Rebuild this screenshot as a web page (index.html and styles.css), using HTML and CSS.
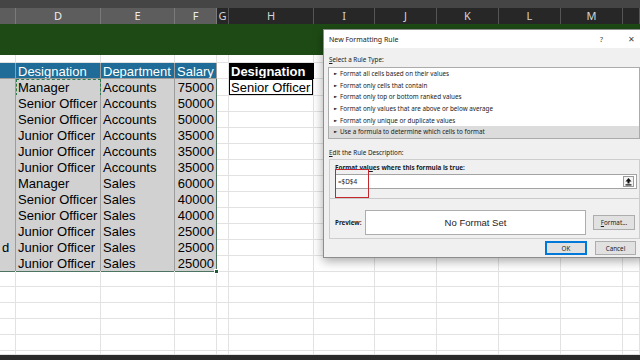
FILE: index.html
```html
<!DOCTYPE html>
<html lang="en">
<head>
    <meta charset="UTF-8">
    <title>Conditional Formatting - Formula Rule</title>
    <link rel="stylesheet" href="styles.css">
</head>
<body>
    <div class="topbar"></div>

    <div class="row heads">
        <span class="on"></span><span class="on">D</span><span class="on">E</span><span class="on">F</span><span>G</span><span>H</span><span>I</span><span>J</span><span>K</span><span>L</span><span>M</span><span></span>
    </div>

    <div class="band"></div>

    <div class="sheet">
        <div class="row part"><span></span><span></span><span></span><span></span><span></span><span></span><span></span><span></span><span></span><span></span><span></span><span></span></div>
        <div class="row"><span class="th"></span><span class="th">Designation</span><span class="th">Department</span><span class="th">Salary</span><span></span><span class="crit">Designation</span><span></span><span></span><span></span><span></span><span></span><span></span></div>
        <div class="row"><span class="t"></span><span class="t copy">Manager</span><span class="t">Accounts</span><span class="t num">75000</span><span></span><span class="box">Senior Officer</span><span></span><span></span><span></span><span></span><span></span><span></span></div>
        <div class="row"><span class="t"></span><span class="t">Senior Officer</span><span class="t">Accounts</span><span class="t num">50000</span><span></span><span></span><span></span><span></span><span></span><span></span><span></span><span></span></div>
        <div class="row"><span class="t"></span><span class="t">Senior Officer</span><span class="t">Accounts</span><span class="t num">50000</span><span></span><span></span><span></span><span></span><span></span><span></span><span></span><span></span></div>
        <div class="row"><span class="t"></span><span class="t">Junior Officer</span><span class="t">Accounts</span><span class="t num">35000</span><span></span><span></span><span></span><span></span><span></span><span></span><span></span><span></span></div>
        <div class="row"><span class="t"></span><span class="t">Junior Officer</span><span class="t">Accounts</span><span class="t num">35000</span><span></span><span></span><span></span><span></span><span></span><span></span><span></span><span></span></div>
        <div class="row"><span class="t"></span><span class="t">Junior Officer</span><span class="t">Accounts</span><span class="t num">35000</span><span></span><span></span><span></span><span></span><span></span><span></span><span></span><span></span></div>
        <div class="row"><span class="t"></span><span class="t">Manager</span><span class="t">Sales</span><span class="t num">60000</span><span></span><span></span><span></span><span></span><span></span><span></span><span></span><span></span></div>
        <div class="row"><span class="t"></span><span class="t">Senior Officer</span><span class="t">Sales</span><span class="t num">40000</span><span></span><span></span><span></span><span></span><span></span><span></span><span></span><span></span></div>
        <div class="row"><span class="t"></span><span class="t">Senior Officer</span><span class="t">Sales</span><span class="t num">40000</span><span></span><span></span><span></span><span></span><span></span><span></span><span></span><span></span></div>
        <div class="row"><span class="t"></span><span class="t">Junior Officer</span><span class="t">Sales</span><span class="t num">25000</span><span></span><span></span><span></span><span></span><span></span><span></span><span></span><span></span></div>
        <div class="row"><span class="t">d</span><span class="t">Junior Officer</span><span class="t">Sales</span><span class="t num">25000</span><span></span><span></span><span></span><span></span><span></span><span></span><span></span><span></span></div>
        <div class="row last"><span class="t"></span><span class="t">Junior Officer</span><span class="t">Sales</span><span class="t num">25000<i class="handle"></i></span><span></span><span></span><span></span><span></span><span></span><span></span><span></span><span></span></div>
        <div class="row"><span></span><span></span><span></span><span></span><span></span><span></span><span></span><span></span><span></span><span></span><span></span><span></span></div>
        <div class="row"><span></span><span></span><span></span><span></span><span></span><span></span><span></span><span></span><span></span><span></span><span></span><span></span></div>
        <div class="row"><span></span><span></span><span></span><span></span><span></span><span></span><span></span><span></span><span></span><span></span><span></span><span></span></div>
        <div class="row"><span></span><span></span><span></span><span></span><span></span><span></span><span></span><span></span><span></span><span></span><span></span><span></span></div>
        <div class="row"><span></span><span></span><span></span><span></span><span></span><span></span><span></span><span></span><span></span><span></span><span></span><span></span></div>
        <div class="row tail"><span></span><span></span><span></span><span></span><span></span><span></span><span></span><span></span><span></span><span></span><span></span><span></span></div>
    </div>

    <div class="bottombar"></div>

    <!-- New Formatting Rule dialog -->
    <div class="dialog">
        <div class="dlg-title">
            <span>New Formatting Rule</span>
            <span class="help">?</span>
            <span class="close">✕</span>
        </div>
        <div class="dlg-body">
            <div class="label"><u>S</u>elect a Rule Type:</div>
            <ul class="rule-list">
                <li><b>►</b>Format all cells based on their values</li>
                <li><b>►</b>Format only cells that contain</li>
                <li><b>►</b>Format only top or bottom ranked values</li>
                <li><b>►</b>Format only values that are above or below average</li>
                <li><b>►</b>Format only unique or duplicate values</li>
                <li class="sel"><b>►</b>Use a formula to determine which cells to format</li>
            </ul>
            <div class="label gap"><u>E</u>dit the Rule Description:</div>
            <div class="desc">
                <div class="desc-top">
                    <div class="strong">Format val<u>u</u>es where this formula is true:</div>
                    <div class="formula">
                        <span>=$D$4</span>
                        <svg class="collapse" width="11" height="11" viewBox="0 0 11 11">
                            <rect x="0.5" y="0.5" width="10" height="10" fill="#f4f4f4" stroke="#9a9a9a"/>
                            <path d="M5.5 2 L8.5 5.5 H6.5 V7.5 H4.5 V5.5 H2.5 Z" fill="#111"/>
                            <rect x="2.5" y="8.3" width="6" height="1.2" fill="#111"/>
                        </svg>
                    </div>
                </div>
                <div class="preview-row">
                    <span class="strong pv-label">Preview:</span>
                    <div class="preview">No Format Set</div>
                    <button class="btn fmt"><u>F</u>ormat...</button>
                </div>
            </div>
            <div class="actions">
                <button class="btn ok">OK</button>
                <button class="btn">Cancel</button>
            </div>
        </div>
        <div class="mark"></div>
    </div>
</body>
</html>
```

FILE: styles.css
```css
body { margin: 0; width: 640px; height: 360px; overflow: hidden; position: relative; background: #fff; font-family: "Liberation Sans", Arial, sans-serif; --cols: 16px 85px 74px 42px 12px 85px 61px 62px 62px 62px 62px 17px; }

.topbar { height: 8px; background: #454545; }
.band { height: 31px; background: #1e4b15; }
.bottombar { height: 5px; background: #2a2a2a; }

/* sheet grid */
.row { display: grid; grid-template-columns: var(--cols); height: 16px; }
.row > span { box-sizing: border-box; border-right: 1px solid #e2e2e2; border-bottom: 1px solid #e2e2e2; padding: 1px 2px 0; font-size: 13px; line-height: 15px; white-space: nowrap; overflow: hidden; color: #000; }
.row.part { height: 8px; }
.row.tail { height: 4px; }

.heads { background: #272727; }
.heads > span { border: none; border-right: 1px solid #555; text-align: center; font: 11px/16px "Noto Sans", sans-serif; color: #d4d4d4; padding: 0; }
.heads > .on { background: #5d5d5d; color: #ececec; border-right-color: #7a7a7a; }

.row > .t { background: #d1d1d1; border-color: #9c9c9c; }
.row > .th { background: #1e6c97; color: #fff; border-color: #9c9c9c; }
.row > .num { text-align: right; border-right-color: #4d7461; position: relative; overflow: visible; }
.row.last > .t { border-bottom-color: #4d7461; }
.row > .copy { outline: 1px dashed #2f7a4c; outline-offset: -1px; }
.row > .crit { background: #000; color: #fff; font-weight: bold; border-color: #000; }
.row > .box { box-shadow: inset 0 0 0 1px #000; }

.handle { position: absolute; right: -3px; bottom: -3px; width: 5px; height: 5px; background: #1f5a37; border: 1px solid #fff; box-sizing: border-box; }

/* dialog */
.dialog { position: absolute; left: 323px; top: 29px; width: 322px; height: 229px; box-sizing: border-box; background: #f0f0f0; border: 1px solid #8d8d8d; box-shadow: 0 3px 10px rgba(0, 0, 0, 0.35); font-family: "Noto Sans", sans-serif; font-size: 6.3px; color: #1b1b1b; }
.dlg-title { height: 18px; background: #fff; display: flex; align-items: center; padding-left: 5px; font-size: 7px; color: #222; }
.dlg-title .help { margin-left: auto; font-size: 7.5px; color: #444; }
.dlg-title .close { margin: 0 9px 0 25px; font-size: 7.5px; color: #444; }

.dlg-body { padding: 0 4px; }
.label { line-height: 9px; margin: 7px 0 3px 1px; }
.label.gap { margin: 9px 0 2px 1px; }

.rule-list { list-style: none; margin: 0; padding: 0; height: 72px; box-sizing: border-box; background: #fff; border: 1px solid #ababab; }
.rule-list li { height: 11.67px; line-height: 11.67px; padding-left: 5px; white-space: nowrap; }
.rule-list li b { font-weight: normal; font-size: 4.5px; margin-right: 2.5px; font-family: "DejaVu Sans", sans-serif; vertical-align: 1px; }
.rule-list li.sel { background: #dcdcdc; }

.desc { margin-left: 1px; height: 80px; box-sizing: border-box; border: 1px solid #cdcdcd; }
.desc-top { height: 39px; box-sizing: border-box; padding: 3px 0 0 5px; border-bottom: 1px solid #c9c9c9; }
.strong { font-weight: bold; line-height: 9px; }
.formula { margin-top: 2px; width: 302px; height: 15px; box-sizing: border-box; display: flex; align-items: center; padding: 0 2px; background: #fff; border: 1px solid #a3a3a3; }
.collapse { margin-left: auto; }

.preview-row { height: 39px; box-sizing: border-box; padding: 7px 0 0 5px; display: flex; align-items: center; }
.pv-label { width: 30px; }
.preview { width: 221px; height: 25px; box-sizing: border-box; border: 1px solid #adadad; background: #fff; display: flex; align-items: center; justify-content: center; font: 9.5px "Liberation Sans", Arial, sans-serif; color: #1d1d1d; }

.btn { height: 15px; padding: 0; box-sizing: border-box; background: #e1e1e1; border: 1px solid #adadad; font-family: "Noto Sans", sans-serif; font-size: 6.3px; color: #1b1b1b; }
.fmt { width: 42px; margin-left: 7px; }
.actions { display: flex; justify-content: flex-end; gap: 8px; margin-top: 2px; padding-right: 4px; }
.actions .btn { width: 41px; height: 14px; }
.actions .ok { width: 42px; border-color: #0078d7; box-shadow: inset 0 0 0 1px #0078d7; }

.mark { position: absolute; left: 11px; top: 139px; width: 34px; height: 29px; box-sizing: border-box; border: 1.5px solid #c4262d; }
```
